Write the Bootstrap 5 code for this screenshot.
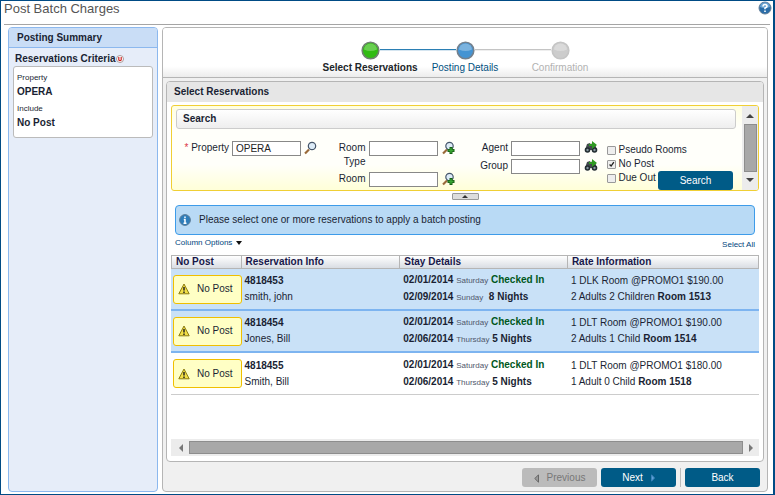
<!DOCTYPE html>
<html lang="en">
<head>
<meta charset="utf-8">
<meta name="viewport" content="width=device-width, initial-scale=1">
<title>Post Batch Charges</title>
<link rel="stylesheet" href="https://cdn.jsdelivr.net/npm/bootstrap@5.3.0/dist/css/bootstrap.min.css">
<style>
body{font:10px/14px "Liberation Sans",Arial,sans-serif;color:#1a1f33;background:#fff}
.app{border:1px solid #004b85;border-right-width:2px;padding:0 3px 2px}
.page-title{font-size:13px;line-height:16px;font-weight:400;color:#555}
.help{margin-right:-2px}
.titlebar{height:24px;border-bottom:1px solid #a5a5a5}
.workarea{padding:2px 2px 0 4px;gap:4px}
.summary{width:150px;background:#e6edf9;border:1px solid #8cb8ee;border-radius:4px;overflow:hidden}
.summary-head{height:20px;line-height:19px;padding-left:8px;background:#c9ddf6;border-bottom:1px solid #8cb8ee;font-size:10px}
.criteria-title{padding:4px 0 0 6px}
.criteria{margin:0 4px;padding:4px 3px 7px;border:1px solid #bbb;border-radius:3px;background:#fff}
.tiny{font-size:8px}
.criteria strong{display:block}
.criteria strong + .tiny{margin-top:3px}
.main-panel{border:1px solid #b5b5b5;border-radius:4px;background:#f0f0f0;min-width:0;overflow:hidden}
.wizard{height:50px;background:linear-gradient(#fff 78%,#ececec);border-bottom:1px solid #b5b5b5;padding-top:13px}
.step{width:95px;position:relative;color:#b2b2b2;line-height:15px}
.step + .step::before{content:"";position:absolute;top:8px;right:57px;width:76px;height:2px;background:#c4c4c4;border-bottom:1px solid #eee}
.step.next-step{color:#005080}
.step.next-step::before{background:#2b7fb4;border-color:#d5e5f0}
.step svg{display:block;margin:0 auto}
.select-panel{margin:3px 3px 0;border:1px solid #b5b5b5;border-radius:4px;background:#fff;overflow:hidden}
.select-head{height:20px;line-height:19px;padding-left:7px;background:#e6e6e6}
.select-body{padding:3px 4px 5px}
.search-box{border:1px solid #f0cf35;border-radius:3px;background:linear-gradient(#ffffdf,#fffffa 25%,#fffffa 70%,#ffffd8);overflow:hidden}
.search-title{height:20px;line-height:18px;margin:3px 6px 0 4px;padding-left:6px;border:1px solid #ccc;border-radius:3px;background:linear-gradient(#fff,#eee)}
.filters{padding:12px 0 0}
.field{gap:3px}
.field label{flex:none;width:51px;text-align:right}
.field.first label{width:57px}
.field .form-control{width:69px;height:15px;min-height:0;flex:none;padding:0 3px;border:1px solid #888;border-radius:0;font-size:10px;line-height:13px;color:#222}
.field svg{flex:none;margin-left:1px}
.field.first svg{margin-left:0}
.row-gap{margin-bottom:3px}
.checks{padding:2px 9px 0 7px}
.check-row{gap:3px;height:14px}
.check-row .form-check-input{width:9px;height:9px;margin:0;border:1px solid #999;border-radius:1px;background-color:#eee;flex:none}
.check-row .form-check-input:checked{background-color:#eee;background-image:url("data:image/svg+xml,%3Csvg xmlns='http://www.w3.org/2000/svg' viewBox='0 0 9 9'%3E%3Cpath d='M2 4.5l2 2L7.500 1.500' fill='none' stroke='%23222' stroke-width='1.700'/%3E%3C/svg%3E");background-size:100% 100%}
.action{width:75px;height:19px;padding:0;border:0;border-radius:3px;background:#005b87;color:#fff;font-size:10px;line-height:19px}
.action:hover{background:#004a70;color:#fff}
.action:disabled{background:#bbb;color:#777;opacity:1}
.vscroll{width:16px;background:#ececec;padding:8px 2px;gap:6px}
.vscroll .thumb{flex:1;width:13px;background:#a8a8a8;border:1px solid #8d8d8d}
.collapse-tab{display:flex;align-items:center;justify-content:center;width:27px;height:7px;padding:0;border:1px solid #999;border-radius:1px;background:#ddd;margin:2px auto 5px}
.notice{margin:0 4px;padding:0 3px;height:30px;gap:8px;border:1px solid #3d9be9;border-radius:4px;background:#b9daf5;color:#1a1f33}
.options{height:20px;padding:0 4px}
.options a,.options button{color:#00457c;text-decoration:none;line-height:16px;padding:0;border:0;background:none}
.options a{padding-top:2px}
.res-table{table-layout:fixed;margin:0;color:inherit;border-collapse:separate;border-spacing:0}
.res-table th{height:14px;padding:0 0 0 4px;line-height:12px;border:1px solid #b5b5b5;border-left-width:0;background:linear-gradient(#fff,#d9dde3);color:#17174a}
.res-table th:first-child{border-left-width:1px}
.res-table td{height:42px;padding:0 2px 0 3px;vertical-align:middle;line-height:16px;border:0;border-bottom:1px solid #ccc;background:transparent;color:inherit;white-space:nowrap}
.res-table tr.picked td{background:#c9e1f7;border-bottom:2px solid #7db4f0}
.res-table td:first-child{padding:0 0 0 2px}
.nopost{width:69px;height:29px;padding-left:4px;gap:7px;border:1px solid #f0bf00;border-radius:3px;background:#ffffc5}
.day{font-size:8px;color:#50586c}
.in-house{color:#00581c}
.hscroll{height:17px;background:#ececec;padding:2px 6px 2px 8px;gap:6px}
.hscroll .thumb{flex:1;height:13px;background:#a8a8a8;border:1px solid #8d8d8d}
.foot{padding:6px 7px 4px;gap:4px}
.divider{width:1px;height:19px;background:#bbb}
</style>
</head>
<body>
<div class="app d-flex flex-column min-vh-100">
  <header class="titlebar d-flex justify-content-between align-items-start">
    <h1 class="page-title m-0">Post Batch Charges</h1>
    <a class="help" href="#" aria-label="Help"><svg class="d-block" width="14" height="14" viewBox="0 0 14 14"><circle cx="7" cy="7" r="6" fill="#2a6da8" stroke="#65809a"/><path d="M2 6a5 4.500 0 0 1 10 0q-5 2-10 0" fill="#6ba4d3"/><path d="M5 5.500Q5 3.500 7 3.500T9 5.300Q9 6.300 7 7v1.300M7 9.500V11" fill="none" stroke="#fff" stroke-width="1.600"/></svg></a>
  </header>
  <div class="workarea d-flex flex-grow-1">
    <aside class="summary flex-shrink-0">
      <div class="summary-head fw-bold">Posting Summary</div>
      <div class="criteria-title d-flex align-items-center fw-bold">Reservations Criteria<svg width="8" height="8" viewBox="0 0 8 8"><circle cx="4" cy="4" r="3.500" fill="#fff" stroke="#a99"/><path d="M2.800 2v2.500q0 1.200 1.200 1.200t1.200-1.200V2" fill="none" stroke="#c22" stroke-width="1.200"/></svg></div>
      <div class="criteria">
        <div class="tiny">Property</div><strong>OPERA</strong>
        <div class="tiny">Include</div><strong>No Post</strong>
      </div>
    </aside>
    <main class="main-panel flex-grow-1 d-flex flex-column">
      <nav class="wizard d-flex justify-content-center" aria-label="Steps">
        <div class="step text-center fw-bold text-nowrap text-dark"><svg width="19" height="19" viewBox="0 0 19 19"><circle cx="9.500" cy="9.500" r="8.300" fill="#30bb12" stroke="#6f8070" stroke-width="1.600"/><path d="M3 8.500a6.500 6 0 0 1 13 0q-6.500 3-13 0" fill="#69cf50"/></svg>Select Reservations</div>
        <div class="step next-step text-center"><svg width="19" height="19" viewBox="0 0 19 19"><circle cx="9.500" cy="9.500" r="8.300" fill="#4594d3" stroke="#74818e" stroke-width="1.600"/><path d="M3 8.500a6.500 6 0 0 1 13 0q-6.500 3-13 0" fill="#7bb3df"/></svg>Posting Details</div>
        <div class="step text-center"><svg width="19" height="19" viewBox="0 0 19 19"><circle cx="9.500" cy="9.500" r="8.300" fill="#ccc" stroke="#c5c5c5" stroke-width="1.600"/><path d="M3 8.500a6.500 6 0 0 1 13 0q-6.500 3-13 0" fill="#dadada"/></svg>Confirmation</div>
      </nav>
      <section class="select-panel flex-grow-1 d-flex flex-column">
        <div class="select-head fw-bold">Select Reservations</div>
        <div class="select-body flex-grow-1 d-flex flex-column">
          <form class="search-box d-flex">
            <div class="flex-grow-1">
              <div class="search-title fw-bold">Search</div>
              <div class="filters row g-0">
                <div class="col-3">
                  <div class="field first d-flex align-items-start">
                    <label for="property"><span class="text-danger">*</span> Property</label>
                    <input id="property" class="form-control" value="OPERA">
                    <svg width="14" height="14" viewBox="0 0 14 14"><path d="M1 12.500L5 8.500" stroke="#9a6a3a" stroke-width="2.200"/><circle cx="8" cy="5" r="3.700" fill="#dcebf7" stroke="#46566a" stroke-width="1.200"/></svg>
                  </div>
                </div>
                <div class="col-3">
                  <div class="field row-gap d-flex align-items-start">
                    <label for="roomtype">Room<br>Type</label>
                    <input id="roomtype" class="form-control">
                    <svg width="14" height="14" viewBox="0 0 14 14"><path d="M1 12.500L5 8.500" stroke="#9a6a3a" stroke-width="2.200"/><circle cx="7.500" cy="5" r="3.700" fill="#dcebf7" stroke="#46566a" stroke-width="1.200"/><path d="M9 6v7M5.500 9.500h7" stroke="#175e14" stroke-width="3"/><path d="M9 7v5M6.500 9.500h5" stroke="#38a832" stroke-width="1.400"/></svg>
                  </div>
                  <div class="field d-flex align-items-start">
                    <label for="room">Room</label>
                    <input id="room" class="form-control">
                    <svg width="14" height="14" viewBox="0 0 14 14"><path d="M1 12.500L5 8.500" stroke="#9a6a3a" stroke-width="2.200"/><circle cx="7.500" cy="5" r="3.700" fill="#dcebf7" stroke="#46566a" stroke-width="1.200"/><path d="M9 6v7M5.500 9.500h7" stroke="#175e14" stroke-width="3"/><path d="M9 7v5M6.500 9.500h5" stroke="#38a832" stroke-width="1.400"/></svg>
                  </div>
                </div>
                <div class="col-3">
                  <div class="field row-gap d-flex align-items-start">
                    <label for="agent">Agent</label>
                    <input id="agent" class="form-control">
                    <svg width="14" height="14" viewBox="0 0 14 14"><path d="M3 3l3-1 1 2 1-2 3 1 2 6H1z" fill="#424a4c"/><circle cx="3.500" cy="9" r="2.800" fill="#222c30"/><circle cx="10.500" cy="9" r="2.800" fill="#222c30"/><circle cx="3.500" cy="9" r="1.200" fill="#8798a0"/><circle cx="10.500" cy="9" r="1.200" fill="#8798a0"/><path d="M5 3h3V0l5 4-5 4V5H5z" fill="#2f9a22"/></svg>
                  </div>
                  <div class="field d-flex align-items-start">
                    <label for="group">Group</label>
                    <input id="group" class="form-control">
                    <svg width="14" height="14" viewBox="0 0 14 14"><path d="M3 3l3-1 1 2 1-2 3 1 2 6H1z" fill="#424a4c"/><circle cx="3.500" cy="9" r="2.800" fill="#222c30"/><circle cx="10.500" cy="9" r="2.800" fill="#222c30"/><circle cx="3.500" cy="9" r="1.200" fill="#8798a0"/><circle cx="10.500" cy="9" r="1.200" fill="#8798a0"/><path d="M5 3h3V0l5 4-5 4V5H5z" fill="#2f9a22"/></svg>
                  </div>
                </div>
                <div class="col-3 checks">
                  <div class="check-row d-flex align-items-center"><input class="form-check-input" type="checkbox" id="pseudo"><label for="pseudo">Pseudo Rooms</label></div>
                  <div class="check-row d-flex align-items-center"><input class="form-check-input" type="checkbox" id="nopost" checked><label for="nopost">No Post</label></div>
                  <div class="d-flex justify-content-between align-items-start">
                    <div class="check-row d-flex align-items-center text-nowrap"><input class="form-check-input" type="checkbox" id="dueout"><label for="dueout">Due Out</label></div>
                    <button class="btn action flex-shrink-0" type="button">Search</button>
                  </div>
                </div>
              </div>
            </div>
            <div class="vscroll d-flex flex-column align-items-center" aria-hidden="true">
              <svg width="8" height="4"><path d="M0 4l4-4 4 4z" fill="#444"/></svg>
              <div class="thumb"></div>
              <svg width="8" height="4"><path d="M0 0h8L4 4z" fill="#444"/></svg>
            </div>
          </form>
          <button class="collapse-tab" type="button" aria-label="Collapse search"><svg width="6" height="3"><path d="M0 3l3-3 3 3z" fill="#333"/></svg></button>
          <div class="notice d-flex align-items-center" role="status">
            <svg width="12" height="12" viewBox="0 0 12 12"><circle cx="6" cy="6" r="5.400" fill="#2e7dba" stroke="#5c7d98"/><path d="M6 2.500v1.600M4.800 5.500H6V9M4.500 9.200h3" stroke="#fff" stroke-width="1.500" fill="none"/></svg>
            <span>Please select one or more reservations to apply a batch posting</span>
          </div>
          <div class="options d-flex justify-content-between align-items-start">
            <button type="button" class="tiny d-flex align-items-center">Column Options<svg class="ms-1" width="6" height="4"><path d="M0 0h6L3 4z" fill="#111"/></svg></button>
            <a class="tiny" href="#">Select All</a>
          </div>
          <table class="table res-table">
            <colgroup><col style="width:12%"><col style="width:27%"><col style="width:28.500%"><col style="width:32.500%"></colgroup>
            <thead><tr><th>No Post</th><th>Reservation Info</th><th>Stay Details</th><th>Rate Information</th></tr></thead>
            <tbody>
              <tr class="picked">
                <td><div class="nopost d-flex align-items-center"><svg width="12" height="12" viewBox="0 0 12 12"><path d="M6 1l5.200 9.800H.8z" fill="#f3e048" stroke="#8a7a10" stroke-linejoin="round"/><path d="M6 4v3.500M6 8.500V10" stroke="#222" stroke-width="1.500"/></svg>No Post</div></td>
                <td><strong>4818453</strong><br>smith, john</td>
                <td><strong>02/01/2014</strong> <span class="day">Saturday</span> <strong class="in-house">Checked In</strong><br><strong>02/09/2014</strong> <span class="day">Sunday</span> &nbsp;<strong>8 Nights</strong></td>
                <td>1 DLK Room @PROMO1 $190.00<br>2 Adults 2 Children <strong>Room 1513</strong></td>
              </tr>
              <tr class="picked">
                <td><div class="nopost d-flex align-items-center"><svg width="12" height="12" viewBox="0 0 12 12"><path d="M6 1l5.200 9.800H.8z" fill="#f3e048" stroke="#8a7a10" stroke-linejoin="round"/><path d="M6 4v3.500M6 8.500V10" stroke="#222" stroke-width="1.500"/></svg>No Post</div></td>
                <td><strong>4818454</strong><br>Jones, Bill</td>
                <td><strong>02/01/2014</strong> <span class="day">Saturday</span> <strong class="in-house">Checked In</strong><br><strong>02/06/2014</strong> <span class="day">Thursday</span> <strong>5 Nights</strong></td>
                <td>1 DLT Room @PROMO1 $190.00<br>2 Adults 1 Child <strong>Room 1514</strong></td>
              </tr>
              <tr>
                <td><div class="nopost d-flex align-items-center"><svg width="12" height="12" viewBox="0 0 12 12"><path d="M6 1l5.200 9.800H.8z" fill="#f3e048" stroke="#8a7a10" stroke-linejoin="round"/><path d="M6 4v3.500M6 8.500V10" stroke="#222" stroke-width="1.500"/></svg>No Post</div></td>
                <td><strong>4818455</strong><br>Smith, Bill</td>
                <td><strong>02/01/2014</strong> <span class="day">Saturday</span> <strong class="in-house">Checked In</strong><br><strong>02/06/2014</strong> <span class="day">Thursday</span> <strong>5 Nights</strong></td>
                <td>1 DLT Room @PROMO1 $180.00<br>1 Adult 0 Child <strong>Room 1518</strong></td>
              </tr>
            </tbody>
          </table>
          <div class="hscroll d-flex align-items-center mt-auto" aria-hidden="true">
            <svg width="4" height="8"><path d="M4 0v8L0 4z" fill="#777"/></svg>
            <div class="thumb"></div>
            <svg width="4" height="8"><path d="M0 0v8l4-4z" fill="#777"/></svg>
          </div>
        </div>
      </section>
      <footer class="foot d-flex justify-content-end align-items-center">
        <button class="btn action" type="button" disabled><svg class="me-2" width="5" height="9"><path d="M4.500.8v7.400L.8 4.500z" fill="#999" stroke="#666"/></svg>Previous</button>
        <button class="btn action" type="button">Next<svg class="ms-2" width="4" height="8"><path d="M.5.8v6.400L3.500 4z" fill="#5fa4d8" stroke="#3d82ba"/></svg></button>
        <span class="divider"></span>
        <button class="btn action" type="button">Back</button>
      </footer>
    </main>
  </div>
</div>
<script src="https://cdn.jsdelivr.net/npm/bootstrap@5.3.0/dist/js/bootstrap.bundle.min.js"></script>
</body>
</html>
